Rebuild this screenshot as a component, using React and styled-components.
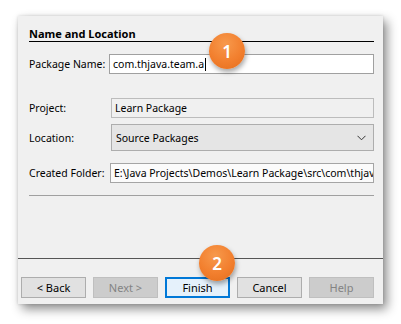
import React from "react";
import styled, { createGlobalStyle } from "styled-components";

const Global = createGlobalStyle`
  html, body { margin: 0; padding: 0; background: #ffffff; }
  body { font-family: "Noto Sans", "Open Sans", sans-serif; font-size: 10.5px; color: #000; }
  * { box-sizing: border-box; }
`;

const Stage = styled.div`
  position: relative;
  width: 401px;
  height: 324px;
  padding: 16px 0 0 18px;
`;

const Dialog = styled.div`
  width: 365px;
  height: 288px;
  background: #f0f0f0;
  display: flex;
  flex-direction: column;
  box-shadow: 4px 5px 10px rgba(0, 0, 0, 0.45), 0 0 3px rgba(0, 0, 0, 0.15);
`;

const Content = styled.div`
  flex: 1;
  padding: 0 9px 0 11px;
  display: flex;
  flex-direction: column;
`;

const Title = styled.div`
  padding-top: 10px;
  line-height: 15px;
  font-weight: 700;
  font-size: 11px;
  border-bottom: 1px solid #000;
`;

const Row = styled.div`
  display: flex;
  align-items: center;
  margin-top: ${(p) => p.$top}px;
  height: ${(p) => p.$h || 20}px;
`;

const Label = styled.div`
  width: ${(p) => p.$w}px;
  flex: none;
  white-space: nowrap;
`;

const Field = styled.div`
  flex: 1;
  min-width: 0;
  height: 100%;
  border: 1px solid ${(p) => p.$border || "#a5a5a5"};
  background: ${(p) => p.$bg || "#ffffff"};
  display: flex;
  align-items: center;
  padding: 0 2px 0 3px;
  white-space: nowrap;
  overflow: hidden;
`;

const Caret = styled.span`
  display: inline-block;
  width: 1px;
  height: 13px;
  background: #000;
  margin-left: 1px;
`;

const ComboText = styled.span`
  flex: 1;
  padding-left: 1px;
`;

const Chevron = styled.svg`
  width: 9px;
  height: 6px;
  margin-right: 5px;
`;

const Separator = styled.div`
  margin-top: 12px;
  height: 1px;
  background: #a0a0a0;
`;

const Footer = styled.div`
  height: 46px;
  border-top: 1px solid #555555;
  padding: 18px 9px 0 3px;
  display: flex;
  gap: 7px;
`;

const Button = styled.div`
  width: 65px;
  height: 21px;
  display: flex;
  align-items: center;
  justify-content: center;
  font-size: 11px;
  border: 1px solid ${(p) => (p.$primary ? "#0078d7" : p.$disabled ? "#bfbfbf" : "#adadad")};
  background: ${(p) => (p.$primary ? "#e5f1fb" : p.$disabled ? "#cccccc" : "#e1e1e1")};
  color: ${(p) => (p.$disabled ? "#838383" : "#000")};
  box-shadow: ${(p) => (p.$primary ? "inset 0 0 0 1px #0078d7" : "none")};
`;

const Badge = styled.div`
  position: absolute;
  left: ${(p) => p.$x}px;
  top: ${(p) => p.$y}px;
  width: 36px;
  height: 36px;
  border-radius: 50%;
  background: radial-gradient(circle at 45% 30%, #f7994c 0%, #f27f2e 55%, #e36d1c 100%);
  color: #fff;
  font-family: "Noto Sans", sans-serif;
  font-weight: 600;
  font-size: 17px;
  display: flex;
  align-items: center;
  justify-content: center;
  box-shadow: 1px 3px 5px rgba(0, 0, 0, 0.35);
`;

export default function App() {
  return (
    <>
      <Global />
      <Stage>
        <Dialog>
          <Content>
            <Title>Name and Location</Title>
            <Row $top={12}>
              <Label $w={80}>Package Name:</Label>
              <Field $border="#a0a0a0">
                com.thjava.team.a<Caret />
              </Field>
            </Row>
            <Row $top={24}>
              <Label $w={82}>Project:</Label>
              <Field $bg="#f0f0f0" $border="#bcbcbc">Learn Package</Field>
            </Row>
            <Row $top={6} $h={27}>
              <Label $w={82}>Location:</Label>
              <Field $bg="#e5e5e5" $border="#adadad">
                <ComboText>Source Packages</ComboText>
                <Chevron viewBox="0 0 9 6">
                  <path d="M0.5 0.8 L4.5 4.8 L8.5 0.8" fill="none" stroke="#333" strokeWidth="1" />
                </Chevron>
              </Field>
            </Row>
            <Row $top={12}>
              <Label $w={81}>Created Folder:</Label>
              <Field $bg="#fbfbfb" $border="#a5a5a5">
                E:\Java Projects\Demos\Learn Package\src\com\thjav
              </Field>
            </Row>
            <Separator />
          </Content>
          <Footer>
            <Button>&lt; Back</Button>
            <Button $disabled>Next &gt;</Button>
            <Button $primary>Finish</Button>
            <Button>Cancel</Button>
            <Button $disabled>Help</Button>
          </Footer>
        </Dialog>
        <Badge $x={209} $y={33}>1</Badge>
        <Badge $x={199} $y={245}>2</Badge>
      </Stage>
    </>
  );
}
